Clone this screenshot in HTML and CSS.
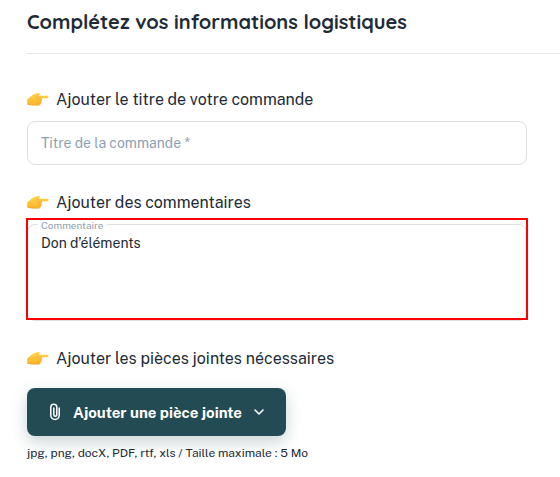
FILE: index.html
```html
<!DOCTYPE html>
<html lang="fr">
<head>
    <meta charset="UTF-8">
    <meta name="viewport" content="width=device-width, initial-scale=1.0">
    <title>Informations logistiques</title>
    <link rel="stylesheet" href="styles.css">
</head>
<body>
    <svg class="sprite" aria-hidden="true">
        <defs>
            <linearGradient id="skin" x1="0" y1="0" x2="0" y2="1">
                <stop offset="0" stop-color="#ffd54a"/>
                <stop offset="1" stop-color="#fdb52a"/>
            </linearGradient>
            <symbol id="hand" viewBox="0 0 22 16">
                <path fill="url(#skin)" d="M0.2 7.2 C1.8 6.4 3.4 4.6 5.2 3.2 C7 2 9.5 1.3 11.8 1 C13 0.9 13.4 2 12.6 2.6 L11.4 3.8 L20 3.8 C22 3.9 22 6.2 20 6.3 L14.4 6.6 C15.4 7 15.4 8.6 14.3 9 C15 9.6 14.8 11 13.6 11.3 C14 12.4 13.2 13.2 12 13.2 L5.4 13.2 C3.5 13.2 2 12.4 0.2 12.4 Z"/>
                <path fill="none" stroke="#eda032" stroke-width="0.6" stroke-linecap="round" d="M11.4 3.8 C10 4.4 9.2 5.1 8.4 6 M14.4 6.6 H10.4 M14.2 9 H10.4 M13.5 11.3 H10.2 M1 12.4 C3 12.5 4 13.2 5.6 13.2 H12"/>
            </symbol>
        </defs>
    </svg>

    <main class="page">
        <h1 class="title">Complétez vos informations logistiques</h1>

        <form class="form">
            <section class="step">
                <h2 class="step-title"><svg class="hand" aria-hidden="true"><use href="#hand"/></svg>Ajouter le titre de votre commande</h2>
                <input class="field" type="text" placeholder="Titre de la commande *" aria-label="Titre de la commande" required>
            </section>

            <section class="step">
                <h2 class="step-title"><svg class="hand" aria-hidden="true"><use href="#hand"/></svg>Ajouter des commentaires</h2>
                <div class="comment">
                    <textarea class="field field-area" id="comment">Don d’éléments</textarea>
                    <label class="comment-label" for="comment">Commentaire</label>
                </div>
            </section>

            <section class="step">
                <h2 class="step-title"><svg class="hand" aria-hidden="true"><use href="#hand"/></svg>Ajouter les pièces jointes nécessaires</h2>
                <div class="upload">
                    <button class="upload-button" type="button">
                        <svg class="clip" viewBox="0 0 12 18" aria-hidden="true"><path d="M10.2 5 V12.2 A4.2 4.2 0 0 1 1.8 12.2 V4.2 A3 3 0 0 1 7.8 4.2 V11.8 A1.5 1.5 0 0 1 4.8 11.8 V5"/></svg>
                        Ajouter une pièce jointe
                        <svg class="chevron" viewBox="0 0 10 6" aria-hidden="true"><path d="M1 1 L5 5 L9 1"/></svg>
                    </button>
                    <p class="hint">jpg, png, docX, PDF, rtf, xls / Taille maximale : 5 Mo</p>
                </div>
            </section>
        </form>
    </main>
</body>
</html>
```

FILE: styles.css
```css
* {
    box-sizing: border-box;
}

body {
    margin: 0;
    background: #fff;
    color: #212b36;
    font-family: "Public Sans", Inter, sans-serif;
}

.sprite {
    position: absolute;
    width: 0;
    height: 0;
}

.page {
    padding-left: 27px;
}

.title {
    margin: 0;
    padding: 6px 0 15px;
    border-bottom: 1px solid #e3e6e8;
    font-family: Quicksand, Lato, sans-serif;
    font-size: 20px;
    font-weight: 700;
    line-height: 32px;
}

.form {
    display: flex;
    flex-direction: column;
    gap: 26px;
    padding: 34px 33px 16px 0;
}

.step {
    display: flex;
    flex-direction: column;
    gap: 9px;
}

.step-title {
    display: flex;
    align-items: center;
    gap: 7px;
    margin: 0;
    font-size: 16px;
    font-weight: 400;
    line-height: 24px;
}

.hand {
    width: 22px;
    height: 16px;
}

.field {
    display: block;
    width: 100%;
    height: 44px;
    padding: 0 13px;
    border: 1px solid #dbe0e4;
    border-radius: 8px;
    background: #fff;
    color: #212b36;
    font-family: inherit;
    font-size: 14px;
    outline: none;
}

.field::placeholder {
    color: #8f9fb2;
    opacity: 1;
}

.field-area {
    height: 97px;
    padding: 7px 13px;
    line-height: 22px;
    resize: none;
}

.comment {
    position: relative;
}

/* Red frame around the comment field */
.comment::after {
    content: "";
    position: absolute;
    inset: -6px -1px 1px;
    border: 2px solid #f00;
    pointer-events: none;
}

.comment-label {
    position: absolute;
    top: -5px;
    left: 10px;
    padding: 0 4px;
    background: #fff;
    color: #8f9fb2;
    font-size: 10px;
    line-height: 12px;
}

.upload {
    display: flex;
    flex-direction: column;
    align-items: flex-start;
    gap: 8px;
    padding-top: 8px;
}

.upload-button {
    display: flex;
    align-items: center;
    gap: 12px;
    height: 48px;
    padding: 0 22px;
    border: 0;
    border-radius: 8px;
    background: #234b54;
    box-shadow: 0 6px 16px rgba(35, 75, 84, 0.24);
    color: #fff;
    font-family: inherit;
    font-size: 15px;
    font-weight: 700;
    cursor: pointer;
}

.clip,
.chevron {
    fill: none;
    stroke: #fff;
    stroke-linecap: round;
}

.clip {
    width: 12px;
    height: 18px;
    stroke-width: 1.5;
}

.chevron {
    width: 10px;
    height: 6px;
    stroke-width: 1.6;
    stroke-linejoin: round;
}

.hint {
    margin: 0;
    font-size: 12px;
    line-height: 18px;
}
```
